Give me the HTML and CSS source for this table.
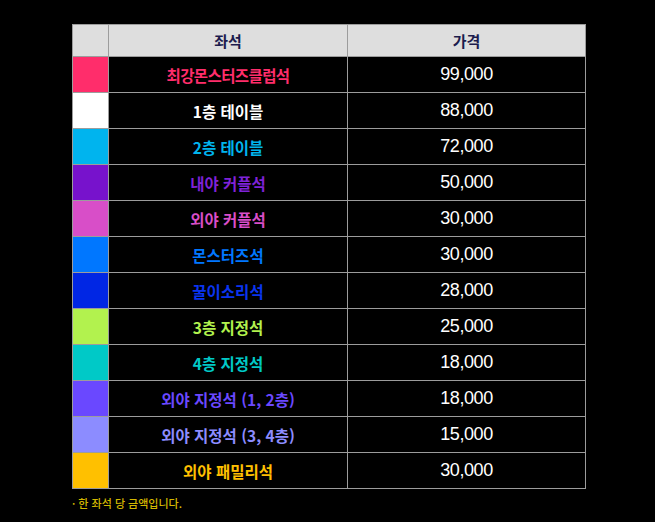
FILE: index.html
```html
<!DOCTYPE html>
<html lang="ko">
<head>
<meta charset="utf-8">
<link rel="stylesheet" href="styles.css">
</head>
<body>
<div class="wrap">
<table class="price">
  <thead>
    <tr><th class="sw"></th><th class="seat">좌석</th><th class="cost">가격</th></tr>
  </thead>
  <tbody>
    <tr><td class="sw c1"></td><td class="name t1 tight">최강몬스터즈클럽석</td><td class="num">99,000</td></tr>
    <tr><td class="sw c2"></td><td class="name t2">1층 테이블</td><td class="num">88,000</td></tr>
    <tr><td class="sw c3"></td><td class="name t3">2층 테이블</td><td class="num">72,000</td></tr>
    <tr><td class="sw c4"></td><td class="name t4">내야 커플석</td><td class="num">50,000</td></tr>
    <tr><td class="sw c5"></td><td class="name t5">외야 커플석</td><td class="num">30,000</td></tr>
    <tr><td class="sw c6"></td><td class="name t6">몬스터즈석</td><td class="num">30,000</td></tr>
    <tr><td class="sw c7"></td><td class="name t7">꿀이소리석</td><td class="num">28,000</td></tr>
    <tr><td class="sw c8"></td><td class="name t8">3층 지정석</td><td class="num">25,000</td></tr>
    <tr><td class="sw c9"></td><td class="name t9">4층 지정석</td><td class="num">18,000</td></tr>
    <tr><td class="sw c10"></td><td class="name t10">외야 지정석 (1, 2층)</td><td class="num">18,000</td></tr>
    <tr><td class="sw c11"></td><td class="name t11">외야 지정석 (3, 4층)</td><td class="num">15,000</td></tr>
    <tr><td class="sw c12"></td><td class="name t12">외야 패밀리석</td><td class="num">30,000</td></tr>
  </tbody>
</table>
<p class="note">· 한 좌석 당 금액입니다.</p>
</div>
</body>
</html>
```

FILE: styles.css
```css
html, body {
  margin: 0;
  padding: 0;
  background: #000;
}
body {
  font-family: "Noto Sans CJK KR", "Noto Sans", sans-serif;
}
.wrap {
  padding: 24px 0 0 72px;
}
.price {
  border-collapse: collapse;
  width: 514px;
  table-layout: fixed;
}
.price th, .price td {
  border: 1px solid #9c9c9c;
  padding: 0;
  text-align: center;
}
.price th {
  background: #dedede;
  height: 31px;
  color: #1c1c4e;
  font-weight: 700;
  font-size: 15px;
}
.price td {
  height: 35px;
  background: #000;
}
.sw { width: 35px; }
.seat { width: 238px; }
.name {
  font-weight: 700;
  font-size: 15.5px;
}
.tight { letter-spacing: -0.6px; }
.num {
  font-family: "Liberation Sans", Arial, sans-serif;
  color: #fff;
  font-size: 18px;
  letter-spacing: -0.4px;
}
.price td.c1 { background: #ff2d6b; }
.price td.c2 { background: #ffffff; }
.price td.c3 { background: #00b4ee; }
.price td.c4 { background: #7712cc; }
.price td.c5 { background: #d84ec8; }
.price td.c6 { background: #0077ff; }
.price td.c7 { background: #0026e4; }
.price td.c8 { background: #b2f24e; }
.price td.c9 { background: #00c9c7; }
.price td.c10 { background: #6a48ff; }
.price td.c11 { background: #8c8cff; }
.price td.c12 { background: #ffc000; }
.t1 { color: #ff2d6b; }
.t2 { color: #ffffff; }
.t3 { color: #00b4ee; }
.t4 { color: #7f22d8; }
.t5 { color: #d84ec8; }
.t6 { color: #0077ff; }
.t7 { color: #0a34f0; }
.t8 { color: #b2f24e; }
.t9 { color: #00c9c7; }
.t10 { color: #6a48ff; }
.t11 { color: #8c8cff; }
.t12 { color: #ffc000; }
.note {
  margin: 6px 0 0 0;
  color: #d4b800;
  font-size: 11px;
  font-weight: 500;
}
```
